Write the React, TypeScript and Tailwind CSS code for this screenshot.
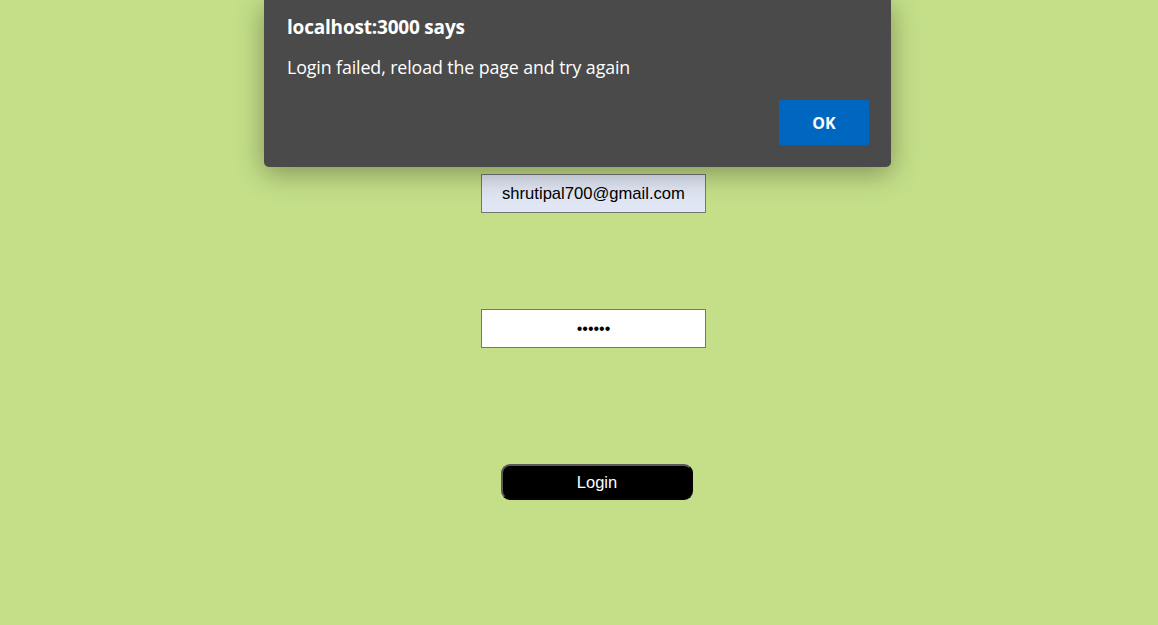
import React from "react";

export default function App() {
  return (
    <div className="relative h-[625px] w-full overflow-hidden bg-[#c4df88]">
      <div className="flex flex-col items-center pl-[29px] pt-[174px]">
        <input
          type="text"
          readOnly
          value="shrutipal700@gmail.com"
          className="h-[39px] w-[225px] border border-[#767676] bg-[#e0e6f3] text-center text-[16.6px] text-black outline-none [font-family:'Liberation_Sans',Arial,sans-serif]"
        />
        <input
          type="password"
          readOnly
          value="123456"
          className="mt-[96px] h-[39px] w-[225px] border border-[#767676] bg-white text-center text-[16px] text-black outline-none [font-family:'Liberation_Sans',Arial,sans-serif]"
        />
        <button className="ml-[7px] mt-[116px] h-[36px] w-[192px] rounded-[9px] border-2 border-[#5a5a5a] bg-black text-[16.5px] text-white [font-family:'Liberation_Sans',Arial,sans-serif] [border-style:outset]">
          Login
        </button>
      </div>

      <div className="absolute left-[264px] top-0 z-10 h-[167px] w-[627px] rounded-b-[5px] bg-[#4a4a4a] shadow-[0_6px_28px_rgba(0,0,0,0.35)] [font-family:'Open_Sans','Noto_Sans',sans-serif]">
        <div className="flex h-full flex-col pl-[23px] pr-[22px]">
          <div className="pt-[13px] text-[19px] font-bold leading-[28px] tracking-[-0.2px] text-white">
            localhost:3000 says
          </div>
          <div className="mt-[13px] text-[17.8px] leading-[26px] tracking-[-0.1px] text-white">
            Login failed, reload the page and try again
          </div>
          <div className="mt-[20px] flex justify-end">
            <button className="h-[45px] w-[90px] rounded-[2px] bg-[#0067c0] text-[16px] font-bold text-white">
              OK
            </button>
          </div>
        </div>
      </div>
    </div>
  );
}
